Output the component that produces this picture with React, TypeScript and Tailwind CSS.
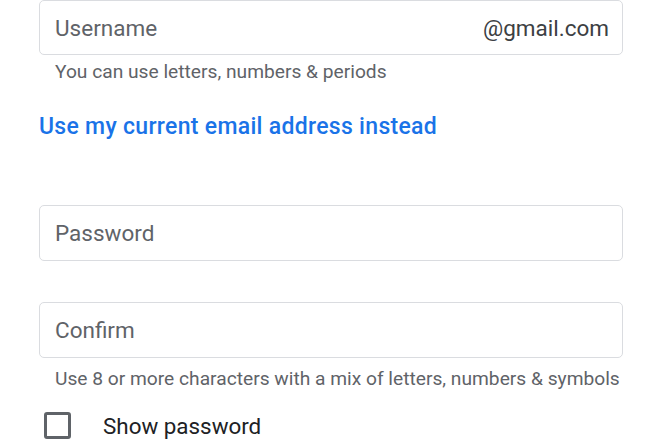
import React from "react";

export default function App() {
  return (
    <div className="w-[660px] h-[440px] overflow-hidden bg-white" style={{ fontFamily: "Roboto, 'Noto Sans', sans-serif" }}>
      <div className="ml-[39px] w-[584px] flex flex-col">
        <div className="h-[55px] border border-[#dadce0] rounded-[5px] flex items-center justify-between pl-[15px] pr-[13px] text-[22.5px] leading-[26px]">
          <span className="text-[#5f6368]">Username</span>
          <span className="text-[#3c4043]">@gmail.com</span>
        </div>
        <div className="mt-[6px] pl-[16px] text-[19.2px] leading-[22px] text-[#5f6368]">You can use letters, numbers &amp; periods</div>
        <div className="mt-[30px] text-[23px] leading-[28px] tracking-[0.3px] font-medium text-[#1a73e8]">Use my current email address instead</div>
        <div className="mt-[64px] h-[56px] border border-[#dadce0] rounded-[5px] flex items-center pl-[15px] text-[22.5px] leading-[26px] text-[#5f6368]">Password</div>
        <div className="mt-[41px] h-[56px] border border-[#dadce0] rounded-[5px] flex items-center pl-[15px] text-[22.5px] leading-[26px] text-[#5f6368]">Confirm</div>
        <div className="mt-[10px] pl-[16px] text-[19.2px] leading-[22px] text-[#5f6368]">Use 8 or more characters with a mix of letters, numbers &amp; symbols</div>
        <div className="mt-[22px] flex items-center">
          <div className="ml-[5px] w-[27px] h-[27px] border-[3px] border-[#5f6368] rounded-[3px]" />
          <span className="ml-[32px] text-[22.4px] leading-[26px] text-[#202124]">Show password</span>
        </div>
      </div>
    </div>
  );
}
